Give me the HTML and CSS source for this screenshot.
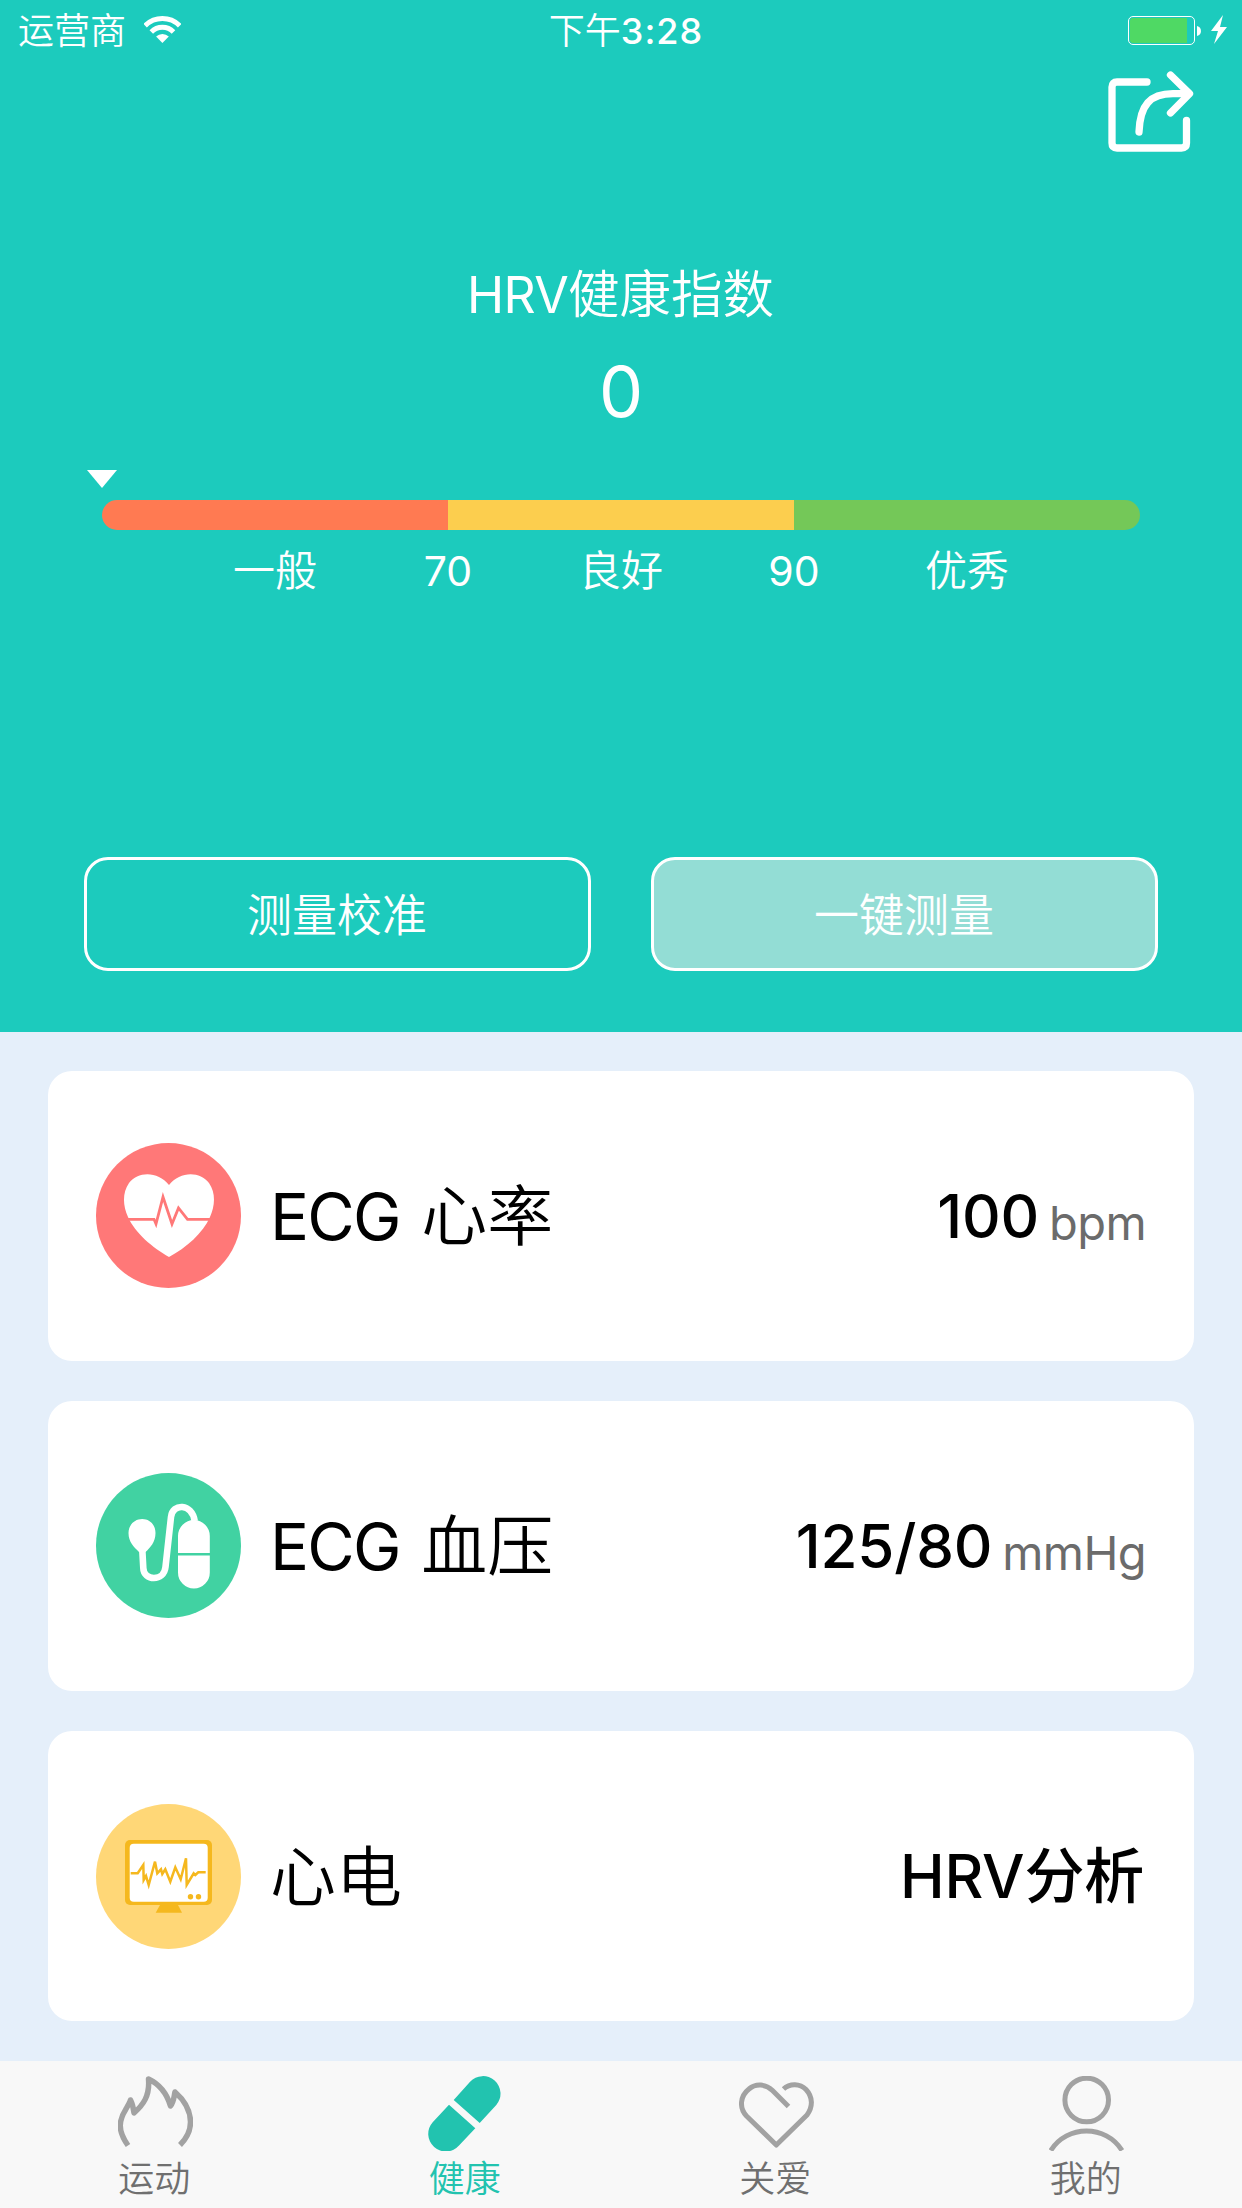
FILE: index.html
```html
<!DOCTYPE html>
<html lang="zh-CN">
<head>
    <meta charset="UTF-8">
    <meta name="viewport" content="width=device-width, initial-scale=1.0">
    <title>健康</title>
    <link rel="stylesheet" href="styles.css">
</head>
<body>

<div class="app">
    <header class="hero">
        <div class="status-bar">
            <div class="carrier">
                <span>运营商</span>
                <svg class="wifi" width="37" height="28" viewBox="0 0 37 28" fill="none" stroke="#fff" stroke-width="5">
                    <path d="M1.1 9.7A24.5 24.5 0 0 1 35.7 9.7"/>
                    <path d="M7.3 15.9A15.7 15.7 0 0 1 29.5 15.9"/>
                    <path d="M18.4 27L12.1 20.6A9 9 0 0 1 24.8 20.6Z" fill="#fff" stroke="none"/>
                </svg>
            </div>
            <div class="time">下午<b>3:28</b></div>
            <div class="power">
                <div class="battery"><div class="battery-level"></div></div>
                <svg width="31" height="30" viewBox="0 0 31 30" fill="#fff">
                    <path d="M0 11C5.300 12 5.300 20 0 21Z"/>
                    <path d="M26 0L14 16H21L17 29L30 12H23Z"/>
                </svg>
            </div>
        </div>

        <div class="toolbar">
            <svg width="88" height="82" viewBox="0 0 88 82" fill="none" stroke="#fff" stroke-width="7.300" stroke-linecap="round" stroke-linejoin="round">
                <path d="M39 11H9Q4 11 4 16V72Q4 77 9 77H73.500Q78.500 77 78.500 72V49.500"/>
                <path d="M31 61C32 34 42 22.700 65 22.700H80"/>
                <path d="M62.500 4L81.500 22.700L62.500 42"/>
            </svg>
        </div>

        <h1 class="title"><span class="latin">HRV</span>健康指数</h1>
        <div class="score">0</div>

        <div class="gauge">
            <div class="pointer"></div>
            <div class="gauge-bar">
                <div class="low"></div>
                <div class="mid"></div>
                <div class="high"></div>
            </div>
            <div class="gauge-labels">
                <span>一般</span>
                <span class="number">70</span>
                <span>良好</span>
                <span class="number">90</span>
                <span>优秀</span>
            </div>
        </div>

        <div class="actions">
            <button class="btn">测量校准</button>
            <button class="btn btn-light">一键测量</button>
        </div>
    </header>

    <main class="cards">
        <div class="card">
            <svg class="card-icon" viewBox="0 0 145 145">
                <circle cx="72.500" cy="72.500" r="72.500" fill="#ff7878"/>
                <path d="M73 42C84 28 104 28 113 40C120 50 119 63 114 74C107 90 90 105 73 114C57 105 39 90 32 74C27 63 26 50 33 40C42 28 62 28 73 42Z" fill="#fff"/>
                <path d="M30 76.300H58L60 81L67 54L76 81L82.500 65L91.500 76.300H117" fill="none" stroke="#ff7878" stroke-width="2.800"/>
            </svg>
            <span class="name"><span class="latin">ECG</span> 心率</span>
            <span class="value">100</span>
            <span class="unit">bpm</span>
        </div>

        <div class="card">
            <svg class="card-icon" viewBox="0 0 145 145">
                <circle cx="72.500" cy="72.500" r="72.500" fill="#41d2a2"/>
                <path d="M43 79C38 74 32.500 69 32.500 60C32.500 52 38.500 46 46.200 46C54 46 59.500 52 59.500 60C59.500 69 54 75 49.500 79Z" fill="#fff"/>
                <path d="M46.300 77L47.300 95C47.500 108 68 109 69.500 94L75 44C76.500 30 96 30 98.700 48" fill="none" stroke="#fff" stroke-width="6.600"/>
                <path d="M82 80V63A15.900 16 0 0 1 113.800 63V80ZM82 82.500H113.800V99.500A15.900 16 0 0 1 82 99.500Z" fill="#fff"/>
            </svg>
            <span class="name"><span class="latin">ECG</span> 血压</span>
            <span class="value">125/80</span>
            <span class="unit">mmHg</span>
        </div>

        <div class="card">
            <svg class="card-icon" viewBox="0 0 145 145">
                <circle cx="72.500" cy="72.500" r="72.500" fill="#ffd777"/>
                <rect x="29" y="36" width="87" height="65" rx="5" fill="#f5b81e"/>
                <rect x="33.700" y="39.700" width="78" height="58" rx="4" fill="#fff"/>
                <path d="M64 101H82L86 108.700H59.700Z" fill="#f5b81e"/>
                <circle cx="94.500" cy="92.700" r="2.700" fill="#f5b81e"/>
                <circle cx="102.500" cy="92.700" r="2.700" fill="#f5b81e"/>
                <path d="M34.700 69.300H41.700L47.300 61L47.700 76L50 72L52.700 81L59 57.700L61.300 69.300L65 65.300L66.300 70L69.300 65.300L74.300 77.700L79.300 63.300L84.700 75.300L90 54.300L90.700 81L97.700 69.300L99.300 71L102.300 68.300H109.700" fill="none" stroke="#f5b81e" stroke-width="2.500"/>
            </svg>
            <span class="name">心电</span>
            <span class="value value-text">HRV分析</span>
        </div>
    </main>

    <nav class="tab-bar">
        <div class="tab">
            <svg viewBox="0 0 75 75" fill="none" stroke="#a2a2a2" stroke-width="5.500" stroke-linejoin="round">
                <path d="M10 69.500C-1 54 1 44 8 33Q12 26 12.500 24Q15 29 16 37C25 29 32 20 30.500 3C41 8 49 18 52.500 30C56 26 56 20 57 16C66 24 72.500 35 72.500 46C72.500 55 68 63 62 69"/>
            </svg>
            <span>运动</span>
        </div>
        <div class="tab tab-active">
            <svg viewBox="0 0 75 75" fill="#22c3af">
                <path d="M25.700 24L42.100 5.800A17.500 17.500 0 0 1 68.300 29L51.700 47Z"/>
                <path d="M21 28.700L4.700 46.200A17.600 17.600 0 0 0 31 69.600L47.300 52.300Z"/>
            </svg>
            <span>健康</span>
        </div>
        <div class="tab">
            <svg viewBox="0 0 75 75" fill="none" stroke="#a2a2a2" stroke-width="5" stroke-linejoin="round">
                <path d="M49.500 30.500L33.500 14.500C27 8 17 7 10 13C1 20 0 32 7.500 40L37.300 69L68 39C74 31 74 21 67 13.500C61 7.500 51 7 44.500 13"/>
            </svg>
            <span>关爱</span>
        </div>
        <div class="tab">
            <svg viewBox="0 0 75 75" fill="none" stroke="#a2a2a2" stroke-width="5">
                <circle cx="37.700" cy="24" r="21.800"/>
                <path d="M1.800 74.500C18 48.500 57 48.500 73 74.500"/>
            </svg>
            <span>我的</span>
        </div>
    </nav>
</div>

</body>
</html>
```
FILE: styles.css
```css
* {
    box-sizing: border-box;
}
body {
    margin: 0;
    font-family: Inter, "Noto Sans CJK SC", sans-serif;
    background-color: #e5effa;
}
svg {
    display: block;
    flex: none;
}
.app {
    width: 1242px;
    height: 2208px;
    display: flex;
    flex-direction: column;
    overflow: hidden;
}

/* top area */
.hero {
    height: 1032px;
    background-color: #1ccbbd;
    color: white;
    font-weight: 350;
}
.status-bar {
    height: 60px;
    padding: 0 14px 0 18px;
    display: grid;
    grid-template-columns: 1fr auto 1fr;
    font-size: 36px;
    line-height: 62px;
}
.carrier {
    height: 62px;
    display: flex;
    align-items: center;
    gap: 18px;
}
.wifi {
    margin-bottom: 2px;
}
.time {
    padding-left: 6px;
}
.time b {
    font-weight: 500;
    letter-spacing: 1px;
}
.power {
    height: 60px;
    display: flex;
    justify-content: flex-end;
    align-items: center;
    gap: 2px;
}
.battery {
    width: 67px;
    height: 29px;
    padding: 1px;
    border: 1px solid white;
    border-radius: 5px;
}
.battery-level {
    width: 57px;
    height: 25px;
    border-radius: 3px 0 0 3px;
    background-color: #4fd964;
}
.toolbar {
    display: flex;
    justify-content: flex-end;
    padding: 11px 46px 0 0;
}
.title {
    height: 76px;
    margin: 103px 0 0;
    padding-right: 1px;
    font-size: 51.5px;
    font-weight: 350;
    line-height: 76px;
    text-align: center;
}
.title .latin {
    font-size: 50px;
    letter-spacing: -0.6px;
}
.latin {
    font-weight: 400;
}
.score {
    height: 138px;
    padding-top: 20px;
    font-size: 70px;
    font-weight: 400;
    line-height: 80px;
    text-align: center;
}
.gauge {
    width: 1038px;
    margin: 0 auto;
}
.pointer {
    width: 30px;
    height: 18px;
    margin-left: -15px;
    background-color: white;
    clip-path: polygon(0 0, 100% 0, 50% 100%);
}
.gauge-bar {
    height: 30px;
    margin-top: 12px;
    display: flex;
    border-radius: 15px;
    overflow: hidden;
}
.gauge-bar div {
    flex: 1;
}
.low {
    background-color: #ff7a52;
}
.mid {
    background-color: #fcce4e;
}
.high {
    background-color: #74c858;
}
.gauge-labels {
    width: 865px;
    height: 60px;
    margin: 11px auto 0;
    display: grid;
    grid-template-columns: repeat(5, 1fr);
    font-size: 42px;
    line-height: 60px;
    text-align: center;
}
.number {
    font-size: 41px;
    font-weight: 400;
}
.actions {
    display: flex;
    gap: 60px;
    padding: 256px 84px 0;
}
.btn {
    flex: 1;
    height: 114px;
    padding: 0 1px 4px 0;
    border: 3px solid white;
    border-radius: 24px;
    background: none;
    color: white;
    font-family: inherit;
    font-size: 45px;
    font-weight: 350;
}
.btn-light {
    background-color: #93ddd5;
}

/* measurement cards */
.cards {
    height: 1029px;
    padding: 38.5px 48px 39.5px;
    display: flex;
    flex-direction: column;
    gap: 40px;
}
.card {
    flex: 1;
    padding: 0 48px;
    display: flex;
    align-items: center;
    border-radius: 24px;
    background-color: white;
    line-height: 90px;
}
.card-icon {
    width: 145px;
    height: 145px;
}
.name {
    flex: 1;
    margin-left: 29px;
    padding-top: 1px;
    font-size: 66px;
    font-weight: 350;
}
.name .latin {
    margin-right: 3px;
    font-size: 65px;
    letter-spacing: -1.8px;
}
.value {
    font-size: 60px;
    font-weight: 500;
    letter-spacing: -0.2px;
}
.value-text {
    padding-right: 2px;
}
.unit {
    margin-left: 10px;
    padding-top: 14px;
    font-size: 47px;
    font-weight: 400;
    letter-spacing: -0.6px;
    color: #6b6b6b;
}

/* bottom tabs */
.tab-bar {
    height: 147px;
    display: grid;
    grid-template-columns: repeat(4, 1fr);
    background-color: #f8f8f8;
}
.tab {
    padding-top: 15px;
    display: flex;
    flex-direction: column;
    align-items: center;
    font-size: 36px;
    font-weight: 350;
    line-height: 56px;
    color: #6f6f6f;
}
.tab span {
    padding-right: 2px;
}
.tab svg {
    width: 75px;
    height: 75px;
}
.tab-active {
    color: #22c3af;
}
```
